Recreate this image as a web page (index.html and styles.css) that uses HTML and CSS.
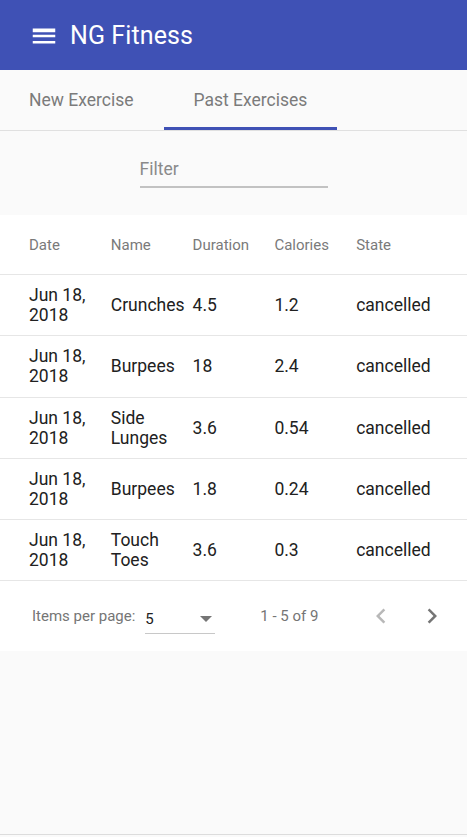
FILE: index.html
```html
<!DOCTYPE html>
<html>
<head>
<meta charset="utf-8">
<link rel="stylesheet" href="styles.css">
</head>
<body>
<div class="app">
  <header class="toolbar">
    <svg class="menu-icon" viewBox="0 0 24 24" width="30" height="30"><path fill="#fff" d="M3 18h18v-2H3v2zm0-5h18v-2H3v2zm0-6v2h18V6H3z"/></svg>
    <span class="title">NG Fitness</span>
  </header>
  <nav class="tabs">
    <div class="tab">New Exercise</div>
    <div class="tab active">Past Exercises</div>
  </nav>
  <div class="filter-area">
    <div class="field">
      <input class="field-input" type="text" placeholder="Filter">
    </div>
  </div>
  <div class="table">
    <div class="row header">
      <div class="cell">Date</div><div class="cell">Name</div><div class="cell">Duration</div><div class="cell">Calories</div><div class="cell">State</div>
    </div>
    <div class="row">
      <div class="cell">Jun 18, 2018</div><div class="cell">Crunches</div><div class="cell">4.5</div><div class="cell">1.2</div><div class="cell">cancelled</div>
    </div>
    <div class="row">
      <div class="cell">Jun 18, 2018</div><div class="cell">Burpees</div><div class="cell">18</div><div class="cell">2.4</div><div class="cell">cancelled</div>
    </div>
    <div class="row">
      <div class="cell">Jun 18, 2018</div><div class="cell">Side Lunges</div><div class="cell">3.6</div><div class="cell">0.54</div><div class="cell">cancelled</div>
    </div>
    <div class="row">
      <div class="cell">Jun 18, 2018</div><div class="cell">Burpees</div><div class="cell">1.8</div><div class="cell">0.24</div><div class="cell">cancelled</div>
    </div>
    <div class="row">
      <div class="cell">Jun 18, 2018</div><div class="cell">Touch Toes</div><div class="cell">3.6</div><div class="cell">0.3</div><div class="cell">cancelled</div>
    </div>
    <div class="paginator">
      <span class="pg-label">Items per page:</span>
      <div class="pg-select">
        <span class="pg-value">5</span>
        <span class="pg-arrow"></span>
      </div>
      <span class="pg-range">1 - 5 of 9</span>
      <div class="pg-nav">
        <svg class="pg-btn disabled" viewBox="0 0 24 24" width="30" height="30"><path fill="currentColor" d="M15.41 7.41L14 6l-6 6 6 6 1.41-1.41L10.83 12z"/></svg>
        <svg class="pg-btn" viewBox="0 0 24 24" width="30" height="30"><path fill="currentColor" d="M8.59 16.59L10 18l6-6-6-6-1.41 1.41L13.17 12z"/></svg>
      </div>
    </div>
  </div>
  <div class="spacer"></div>
</div>
</body>
</html>
```

FILE: styles.css
```css
* { box-sizing: border-box; }
html, body {
  margin: 0;
  padding: 0;
  height: 837px;
  overflow: hidden;
  background: #fafafa;
  font-family: Roboto, "Liberation Sans", sans-serif;
}
.app {
  display: flex;
  flex-direction: column;
  height: 835px;
  border-bottom: 1px solid #dcdcdc;
}
.toolbar {
  height: 70px;
  background: #3f51b5;
  display: flex;
  align-items: center;
  padding-left: 29px;
  color: #fff;
  flex: none;
}
.menu-icon { display: block; margin-right: 11px; margin-top: 2px; }
.title {
  font-size: 25px;
  font-weight: 400;
  letter-spacing: 0.1px;
}
.tabs {
  display: flex;
  height: 61px;
  border-bottom: 1px solid #e0e0e0;
  flex: none;
}
.tab {
  padding: 0 30px 1px 29px;
  height: 60px;
  display: flex;
  align-items: center;
  font-size: 17.5px;
  color: #7b7b7b;
}
.tab.active {
  padding-left: 30px;
  box-shadow: inset 0 -3px 0 #3f51b5;
}
.filter-area {
  height: 84px;
  display: flex;
  justify-content: center;
  flex: none;
}
.field {
  width: 188px;
  margin-top: 25px;
  height: 32px;
  border-bottom: 2px solid #c2c2c2;
}
.field-input {
  width: 100%;
  border: none;
  background: transparent;
  font-family: inherit;
  font-size: 17.5px;
  padding: 0;
  height: 26px;
  outline: none;
}
.field-input::placeholder { color: #8a8a8a; }
.table {
  background: #fff;
  flex: none;
}
.row {
  display: flex;
  align-items: center;
  padding: 0 29px;
  height: 61.25px;
  border-bottom: 1.5px solid #e6e6e6;
  font-size: 17.5px;
  color: #212121;
  line-height: 20px;
}
.row.header {
  height: 60px;
  font-size: 15px;
  color: #7a7a7a;
}
.cell {
  flex: 1;
  min-width: 0;
}
.paginator {
  height: 70px;
  display: flex;
  align-items: center;
  padding-left: 32px;
  font-size: 15px;
  color: #757575;
}
.pg-label { margin-right: 10px; }
.pg-select {
  width: 70px;
  height: 30px;
  display: flex;
  align-items: center;
  justify-content: space-between;
  border-bottom: 1.5px solid #c8c8c8;
  margin-top: 6px;
  padding-right: 3px;
}
.pg-value { color: #212121; font-size: 15px; }
.pg-arrow {
  width: 0;
  height: 0;
  border-left: 6px solid transparent;
  border-right: 6px solid transparent;
  border-top: 6px solid #757575;
}
.pg-range { margin-left: 45px; }
.pg-nav {
  display: flex;
  gap: 21px;
  margin-left: 48px;
}
.pg-btn { color: #757575; display: block; }
.pg-btn.disabled { color: #b8b8b8; }
.spacer { flex: 1; }
```
